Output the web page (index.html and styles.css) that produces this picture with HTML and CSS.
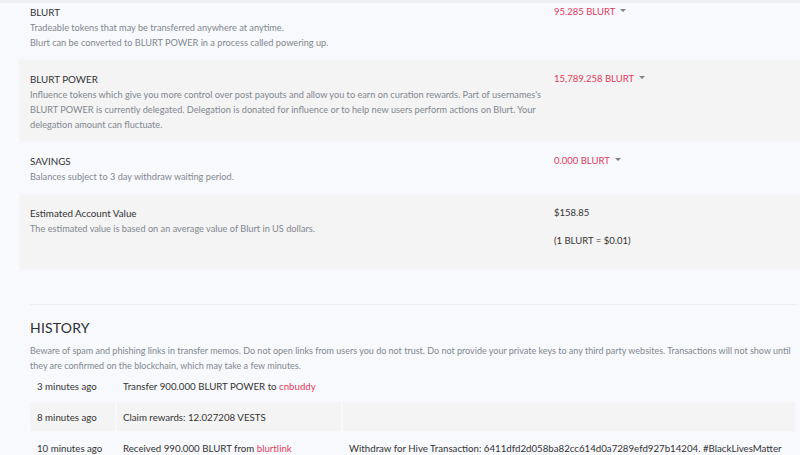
FILE: index.html
```html
<!DOCTYPE html>
<html lang="en">
<head>
<meta charset="utf-8">
<title>Wallet</title>
<link rel="stylesheet" href="styles.css">
</head>
<body>
<div class="top-edge"></div>
<main class="wallet">
  <section class="balance balance--first">
    <div class="info">
      <div class="title">BLURT</div>
      <div class="desc">Tradeable tokens that may be transferred anywhere at anytime.<br>Blurt can be converted to BLURT POWER in a process called powering up.</div>
    </div>
    <div class="value"><span class="amount">95.285 BLURT</span><span class="caret"></span></div>
  </section>
  <section class="balance balance--alt">
    <div class="info">
      <div class="title">BLURT POWER</div>
      <div class="desc">Influence tokens which give you more control over post payouts and allow you to earn on curation rewards. Part of usernames's BLURT POWER is currently delegated. Delegation is donated for influence or to help new users perform actions on Blurt. Your delegation amount can fluctuate.</div>
    </div>
    <div class="value"><span class="amount">15,789.258 BLURT</span><span class="caret"></span></div>
  </section>
  <section class="balance">
    <div class="info">
      <div class="title">SAVINGS</div>
      <div class="desc">Balances subject to 3 day withdraw waiting period.</div>
    </div>
    <div class="value"><span class="amount">0.000 BLURT</span><span class="caret"></span></div>
  </section>
  <section class="balance balance--alt">
    <div class="info">
      <div class="title">Estimated Account Value</div>
      <div class="desc">The estimated value is based on an average value of Blurt in US dollars.</div>
    </div>
    <div class="value value--plain">
      <p class="usd">$158.85</p>
      <p class="usd">(1 BLURT = $0.01)</p>
    </div>
  </section>

  <hr class="divider">

  <section class="history">
    <h2 class="history-title">HISTORY</h2>
    <p class="history-note">Beware of spam and phishing links in transfer memos. Do not open links from users you do not trust. Do not provide your private keys to any third party websites. Transactions will not show until they are confirmed on the blockchain, which may take a few minutes.</p>
    <table class="history-table">
      <colgroup><col class="c-time"><col class="c-op"><col class="c-memo"></colgroup>
      <tbody>
        <tr><td>3 minutes ago</td><td>Transfer 900.000 BLURT POWER to <a class="user" href="#">cnbuddy</a></td><td></td></tr>
        <tr class="striped"><td>8 minutes ago</td><td>Claim rewards: 12.027208 VESTS</td><td></td></tr>
        <tr><td>10 minutes ago</td><td>Received 990.000 BLURT from <a class="user" href="#">blurtlink</a></td><td>Withdraw for Hive Transaction: 6411dfd2d058ba82cc614d0a7289efd927b14204. #BlackLivesMatter</td></tr>
      </tbody>
    </table>
  </section>
</main>
</body>
</html>
```
FILE: styles.css
```css
* { box-sizing: border-box; }
html, body { margin: 0; padding: 0; }
body {
  background: #f8f9fd;
  font-family: "Lato", "Liberation Sans", sans-serif;
  color: #333;
  overflow: hidden;
}
.top-edge { height: 3px; background: #eceef3; }
.wallet { padding-left: 19px; }
.balance {
  display: grid;
  grid-template-columns: 524px 1fr;
  padding: 11px 0 10px 11px;
}
.balance--first { padding-top: 1px; }
.balance--alt { background: #f4f4f4; }
.title { font-size: 9.8px; line-height: 16px; color: #333; }
.desc { font-size: 9.2px; line-height: 15px; color: #82878f; }
.value { font-size: 9.5px; line-height: 16px; display: flex; align-items: center; height: 16px; }
.value--plain { display: block; height: auto; }
.amount { color: #e33a5c; }
.caret {
  width: 0; height: 0; margin-left: 5px; margin-top: -3px;
  border-left: 3px solid transparent;
  border-right: 3px solid transparent;
  border-top: 3px solid #808080;
}
.usd { margin: 0 0 12px; color: #333; }
.usd:last-child { margin-bottom: 11px; }
.divider {
  margin: 34px 3px 0 11px;
  border: 0; height: 1px; background: #eceef3;
}
.history { padding: 11px 3px 0 11px; }
.history-title { margin: 0; font-weight: 400; font-size: 14px; line-height: 24px; color: #2e2e2e; letter-spacing: 0.2px; }
.history-note { margin: 3px 0 0; font-size: 9px; line-height: 15px; color: #82878f; }
.history-table {
  border-collapse: separate;
  border-spacing: 2px;
  margin: -4px 0 0 -2px;
  width: calc(100% + 2px);
  font-size: 9.7px;
  color: #333;
  table-layout: fixed;
}
.c-time { width: 85px; }
.c-op { width: 224px; }
.history-table td { padding: 0 6px; height: 29px; white-space: nowrap; }
.history-table td:first-child { padding-left: 7px; }
.striped td { background: #f4f4f4; }
.user { color: #e33a5c; text-decoration: none; }
```
